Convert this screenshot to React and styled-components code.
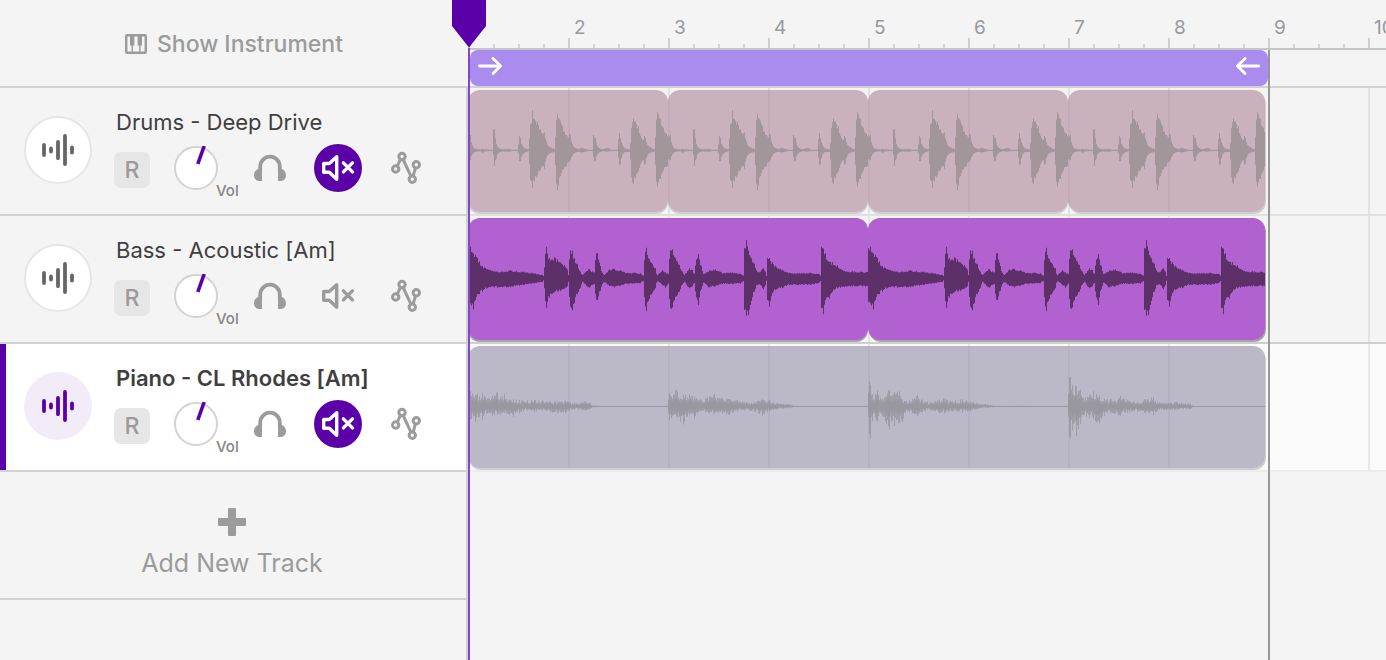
import React, { useState } from "react";
import styled, { createGlobalStyle, css } from "styled-components";

const GlobalStyle = createGlobalStyle`
  *, *::before, *::after { box-sizing: border-box; }
  body {
    margin: 0;
    background: #f4f4f4;
    font-family: Inter, "Liberation Sans", sans-serif;
    color: #3f3f3f;
  }
  button { font: inherit; color: inherit; background: none; border: 0; padding: 0; cursor: pointer; }
`;

const BAR = 100;
const LINE = "#d1d1d1";
const ACCENT = "#5b00a8";

/* ---------- layout ---------- */

const Studio = styled.div`
  display: flex;
  min-height: 100vh;
  overflow: hidden;
`;

const Sidebar = styled.aside`
  flex: 0 0 468px;
  display: flex;
  flex-direction: column;
`;

const SidebarHeader = styled.header`
  height: 88px;
  padding-top: 2px;
  display: flex;
  align-items: center;
  justify-content: center;
  border-bottom: 2px solid ${LINE};
`;

const TrackList = styled.div`
  flex: 1;
  border-right: 2px solid ${LINE};
`;

const InstrumentButton = styled.button`
  display: flex;
  align-items: center;
  gap: 10px;
  font-size: 23px;
  font-weight: 500;
  line-height: 32px;
  color: #9b9b9b;
`;

const TrackRow = styled.section`
  height: 128px;
  display: flex;
  gap: 22px;
  padding: 18px 24px 0;
  border-bottom: 2px solid ${LINE};
  ${(p) => p.$selected && css`
    background: #fff;
    box-shadow: inset 6px 0 ${ACCENT};
  `}
`;

const Avatar = styled.button`
  flex: none;
  width: 68px;
  height: 68px;
  margin-top: 10px;
  border-radius: 50%;
  display: grid;
  place-items: center;
  background: ${(p) => (p.$selected ? "#f2ecf9" : "#fff")};
  border: 2px solid ${(p) => (p.$selected ? "#f2ecf9" : "#e6e6e6")};
  color: ${(p) => (p.$selected ? ACCENT : "#666")};
`;

const TrackInfo = styled.div`
  display: flex;
  flex-direction: column;
  gap: 6px;
`;

const TrackName = styled.h2`
  margin: 0;
  padding-left: 2px;
  font-size: 22px;
  line-height: 32px;
  font-weight: ${(p) => (p.$selected ? 600 : 400)};
  white-space: nowrap;
`;

const Controls = styled.div`
  display: flex;
  align-items: center;
  gap: 20px;
  height: 48px;
`;

const RecordButton = styled.button`
  width: 36px;
  height: 36px;
  margin-top: 4px;
  border-radius: 7px;
  background: #e6e6e6;
  color: #9b9b9b;
  font-size: 23px;
  font-weight: 500;
  line-height: 36px;
`;

const IconButton = styled.button`
  width: 48px;
  height: 48px;
  border-radius: 50%;
  color: ${(p) => (p.$on ? "#fff" : "#9b9b9b")};
  background: ${(p) => (p.$on ? ACCENT : "transparent")};
  svg { display: block; }
`;

const KnobLabel = styled.label`
  position: relative;
  width: 56px;
  height: 48px;
  padding: 2px 4px;
  svg { display: block; }
  input {
    position: absolute;
    inset: 2px 8px 2px 4px;
    width: 44px;
    height: 44px;
    margin: 0;
    opacity: 0;
  }
  span {
    position: absolute;
    left: 46px;
    top: 37px;
    font-size: 15px;
    line-height: 20px;
    font-weight: 500;
    color: #858585;
  }
`;

const AddTrack = styled.button`
  width: 100%;
  height: 128px;
  padding: 18px 2px 0 0;
  display: flex;
  flex-direction: column;
  align-items: center;
  justify-content: center;
  gap: 10px;
  border-bottom: 2px solid ${LINE};
  font-size: 25px;
  line-height: 34px;
  color: #9b9b9b;
`;

/* ---------- timeline ---------- */

const Timeline = styled.main`
  position: relative;
  flex: 1;
  min-width: 0;
`;

const Scroller = styled.div`
  overflow: hidden;
`;

const Ruler = styled.div`
  display: flex;
  height: 50px;
  border-bottom: 2px solid #c6c6c6;
`;

const RulerBar = styled.div`
  flex: 0 0 ${BAR}px;
  display: flex;
  flex-direction: column;
  justify-content: flex-end;
  span {
    padding-left: 6px;
    font-size: 19px;
    line-height: 20px;
    color: #98989e;
  }
`;

const Ticks = styled.div`
  display: flex;
  align-items: flex-end;
  gap: 23px;
  height: 10px;
  i { width: 2px; height: 4px; background: #d4d4d4; }
  i:first-child { height: 10px; background: #cfcfcf; }
`;

const LoopTrack = styled.div`
  height: 38px;
  padding-left: 2px;
  border-bottom: 2px solid ${LINE};
`;

const LoopRegion = styled.div`
  width: 798px;
  height: 36px;
  padding: 0 8px;
  display: flex;
  align-items: center;
  justify-content: space-between;
  border-radius: 8px;
  background: #aa8cee;
  color: #fff;
  button { padding-bottom: 4px; }
  svg { display: block; }
`;

const Lane = styled.div`
  height: 128px;
  display: flex;
  padding-top: 2px;
  border-bottom: 2px solid ${(p) => p.$line};
  background:
    repeating-linear-gradient(90deg, #00000012 0 2px, transparent 2px ${BAR}px)
    ${(p) => (p.$selected ? "#fafafa" : "#f4f4f4")};
`;

const Clip = styled.div`
  flex: none;
  width: ${(p) => p.$bars * BAR}px;
  height: 122px;
  overflow: hidden;
  border-radius: 12px;
  background: ${(p) => p.$fill};
  color: ${(p) => p.$wave};
  box-shadow: 0 2px ${(p) => p.$shadow};
  svg { display: block; }
  &:last-child {
    width: ${(p) => p.$bars * BAR - 3}px;
    box-shadow: 1px 2px ${(p) => p.$shadow};
  }
`;

const Playhead = styled.div`
  position: absolute;
  z-index: 2;
  top: 0;
  bottom: 0;
  left: -16px;
  width: 34px;
  display: flex;
  flex-direction: column;
  align-items: center;
  svg { display: block; flex: none; }
  &::after { content: ""; flex: 1; width: 2px; background: #8048c9; }
`;

const EndLine = styled.div`
  position: absolute;
  top: 50px;
  bottom: 0;
  left: 800px;
  width: 2px;
  background: #979797;
`;

/* ---------- icons ---------- */

const PianoIcon = () => (
  <svg width="22" height="20" viewBox="0 0 22 20" aria-hidden="true">
    <rect x="1.2" y="1.2" width="19.6" height="17.6" rx="1" fill="none" stroke="currentColor" strokeWidth="2.4" />
    <path d="M5 1h4.3v10.5H5zM12.7 1H17v10.5h-4.3zM6.5 11h1.4v8H6.5zM14.2 11h1.4v8h-1.4z" fill="currentColor" />
  </svg>
);

const WaveIcon = () => (
  <svg width="36" height="36" viewBox="-18 -18 36 36" aria-hidden="true" stroke="currentColor" strokeWidth="3.8" strokeLinecap="round">
    <path d="M-14 -5V5M-7 -1.5V1.5M0 -8.2V8.2M7 -14V14M14 -2.5V2.5" />
  </svg>
);

const HeadphonesIcon = () => (
  <svg width="48" height="48" viewBox="0 0 48 48" aria-hidden="true">
    <path d="M14.2 27V22.5a9.8 9.8 0 0 1 19.6 0V27" fill="none" stroke="currentColor" strokeWidth="3.8" />
    <path d="M16 24.6V37h-2.6C10 37 8 34.3 8 31.2c0-3.2 1.7-5.4 4.4-6.2zM32 24.6V37h2.6c3.4 0 5.4-2.700 5.4-5.800 0-3.200-1.700-5.400-4.400-6.200z" fill="currentColor" />
  </svg>
);

const MuteIcon = () => (
  <svg width="48" height="48" viewBox="0 0 48 48" aria-hidden="true" fill="none" stroke="currentColor" strokeWidth="3.4" strokeLinejoin="round" strokeLinecap="round">
    <path d="M9.7 19.5h5.6L22.7 12.7V35.3L15.3 28.2H9.7z" />
    <path d="M29.4 18.9l9 9M38.4 18.9l-9 9" />
  </svg>
);

const AutomationIcon = () => (
  <svg width="48" height="48" viewBox="0 0 48 48" aria-hidden="true" fill="none" stroke="currentColor" strokeWidth="3">
    <circle cx="13.7" cy="25" r="3.2" />
    <circle cx="20" cy="12.5" r="3.2" />
    <circle cx="34.3" cy="20.7" r="3.2" />
    <circle cx="30.3" cy="35.3" r="3.2" />
    <path d="M15.2 22.1L18.5 15.4M21.2 15.5L29 32.3M31.2 32.2L33.4 23.8" />
  </svg>
);

const ArrowIcon = ({ left }) => (
  <svg width="24" height="18" viewBox="0 0 24 18" aria-hidden="true" fill="none" stroke="currentColor" strokeWidth="2.8" strokeLinecap="round" strokeLinejoin="round">
    <path d={left ? "M22.6 9H1.6M9 1.4L1.4 9L9 16.6" : "M1.4 9H22.4M15 1.4L22.6 9L15 16.6"} />
  </svg>
);

const PlusIcon = () => (
  <svg width="28" height="28" viewBox="0 0 28 28" aria-hidden="true" fill="currentColor">
    <rect x="10" y="0" width="8" height="28" rx="1" />
    <rect x="0" y="10" width="28" height="8" rx="1" />
  </svg>
);

const KnobDial = () => (
  <svg width="44" height="44" viewBox="0 0 44 44" aria-hidden="true">
    <circle cx="22" cy="22" r="21" fill="#fff" stroke="#d2d2d2" strokeWidth="2" />
    <path d="M23.8 18L30.2 0" stroke={ACCENT} strokeWidth="3.6" />
  </svg>
);

/* ---------- wave forms ----------
   Envelope points are [x, above, below], at three units to a pixel. */

const DRUMS = [
  [0, 45, 27], [6, 46, 29], [10, 20, 15], [15, 9, 9], [23, 4, 4], [38, 3, 3], [41, 5, 9], [50, 3, 3], [73, 2, 2],
  [75, 62, 15], [78, 64, 46], [83, 22, 28], [88, 10, 9], [100, 3, 3], [121, 5, 5], [132, 2, 2], [149, 2, 2],
  [151, 34, 16], [154, 47, 40], [159, 20, 20], [166, 8, 9], [180, 3, 3],
  [186, 78, 90], [189, 82, 92], [192, 120, 112], [197, 95, 95], [206, 88, 76], [216, 64, 60], [222, 50, 46], [227, 58, 62], [232, 34, 28], [238, 14, 14], [250, 7, 7], [260, 4, 4],
  [262, 78, 84], [267, 110, 120], [274, 95, 84], [282, 74, 60], [292, 48, 52], [300, 38, 34], [304, 58, 36], [309, 26, 20], [318, 9, 8], [332, 4, 4], [340, 8, 7], [350, 4, 4], [362, 2, 2], [373, 2, 2],
  [375, 46, 20], [379, 46, 40], [385, 18, 14], [390, 8, 8], [402, 3, 3], [416, 8, 4], [430, 2, 2], [449, 2, 2],
  [451, 64, 44], [455, 40, 46], [461, 18, 14], [468, 7, 6], [485, 2, 5],
  [488, 60, 72], [493, 100, 108], [500, 88, 86], [510, 72, 62], [519, 36, 36], [526, 32, 30], [529, 48, 50], [534, 24, 24], [541, 12, 10], [552, 5, 5], [560, 3, 3],
  [562, 78, 84], [567, 114, 108], [574, 100, 92], [584, 70, 62], [594, 50, 50], [600, 46, 46],
];

const BASS = [
  [0, 90, 70], [6, 95, 75], [14, 75, 98], [21, 70, 65], [31, 55, 50], [41, 38, 40], [56, 28, 30], [66, 25, 27], [86, 20, 28], [126, 24, 27], [166, 20, 20], [196, 16, 16], [222, 11, 11], [227, 5, 5],
  [229, 60, 55], [234, 95, 88], [241, 60, 60], [256, 65, 42], [266, 58, 40], [276, 48, 37], [286, 42, 32], [296, 32, 27], [300, 10, 10],
  [304, 80, 75], [310, 90, 103], [318, 60, 75], [326, 45, 50], [336, 20, 28], [342, 10, 10], [361, 30, 30], [371, 20, 20], [379, 22, 18],
  [382, 70, 60], [386, 80, 68], [394, 45, 45], [401, 18, 18], [408, 10, 12], [421, 26, 22], [436, 29, 28], [456, 24, 22], [476, 17, 17], [496, 18, 16], [516, 15, 15], [525, 8, 8],
  [529, 70, 75], [534, 92, 98], [541, 60, 65], [551, 45, 45], [561, 30, 30], [566, 8, 8], [581, 25, 20], [591, 18, 28], [601, 15, 15],
  [604, 80, 85], [610, 95, 95], [618, 65, 65], [631, 45, 45], [641, 22, 20], [648, 10, 10], [661, 30, 30], [673, 25, 28], [677, 5, 5],
  [682, 50, 50], [690, 73, 80], [698, 40, 35], [706, 12, 12], [721, 23, 28], [741, 27, 24], [766, 16, 16], [791, 18, 18], [816, 14, 16], [825, 8, 8],
  [828, 90, 95], [834, 115, 112], [838, 90, 120], [846, 65, 80], [856, 50, 45], [866, 20, 20], [873, 18, 18], [884, 32, 35], [891, 20, 20], [895, 5, 5],
  [897, 60, 65], [902, 62, 90], [911, 50, 45], [921, 38, 35], [941, 26, 30], [961, 17, 20], [986, 15, 20], [1026, 17, 20], [1051, 14, 15], [1056, 8, 8],
  [1059, 95, 90], [1064, 92, 115], [1071, 75, 65], [1081, 50, 65], [1091, 50, 42], [1106, 40, 30], [1126, 22, 27], [1156, 21, 24], [1198, 20, 26], [1200, 6, 6],
];

const PIANO = [
  [0, 45, 40], [6, 45, 40], [21, 35, 48], [41, 42, 42], [56, 22, 20], [71, 30, 30], [86, 45, 25], [96, 28, 25], [108, 38, 20], [121, 20, 25], [134, 22, 32], [151, 20, 22], [176, 18, 12], [196, 20, 18], [221, 20, 12], [246, 15, 18], [266, 15, 20], [291, 17, 20], [316, 12, 10], [351, 16, 12], [366, 10, 8], [373, 3, 3], [406, 1, 2], [599, 1, 2],
  [601, 38, 42], [624, 50, 30], [643, 35, 58], [661, 38, 25], [676, 30, 38], [696, 22, 15], [721, 28, 20], [738, 38, 25], [761, 25, 22], [781, 22, 28], [806, 20, 15], [826, 12, 12], [856, 12, 15], [882, 22, 28], [902, 20, 14], [926, 10, 10], [961, 8, 6], [976, 2, 2], [1006, 1, 2], [1199, 1, 2],
  [1201, 80, 60], [1205, 70, 108], [1211, 35, 45], [1226, 50, 45], [1241, 20, 25], [1261, 55, 75], [1271, 30, 40], [1276, 42, 60], [1292, 48, 50], [1301, 20, 50], [1311, 15, 20], [1331, 22, 20], [1346, 35, 30], [1361, 22, 18], [1386, 12, 12], [1411, 20, 20], [1426, 24, 22], [1451, 15, 15], [1481, 22, 20], [1506, 15, 15], [1536, 7, 6], [1556, 7, 6], [1576, 2, 2], [1799, 1, 2],
  [1801, 75, 60], [1804, 95, 106], [1811, 65, 70], [1824, 60, 90], [1834, 58, 60], [1844, 26, 26], [1861, 30, 35], [1874, 47, 38], [1891, 35, 55], [1906, 22, 30], [1926, 22, 22], [1956, 32, 30], [1976, 20, 20], [2006, 14, 15], [2031, 22, 20], [2054, 28, 28], [2071, 12, 12], [2116, 14, 12], [2166, 8, 8], [2176, 1, 2], [2400, 1, 2],
];

const noise = (n) => {
  const s = Math.sin(n * 12.9898) * 43758.5453;
  return s - Math.floor(s);
};

function wavePath(points, rough, scale = 1) {
  const top = [];
  const bottom = [];
  const end = points[points.length - 1][0];
  let k = 0;
  for (let x = 0; x < end; x += 3) {
    while (k < points.length - 2 && points[k + 1][0] <= x) k += 1;
    const [x0, u0, d0] = points[k];
    const [x1, u1, d1] = points[k + 1];
    const t = (x - x0) / (x1 - x0);
    const peak = x - x0 < 3;
    const up = (u0 + (u1 - u0) * t) * (peak ? 1 : 1 - rough * noise(x)) * scale;
    const down = (d0 + (d1 - d0) * t) * (peak ? 1 : 1 - rough * noise(x + 7777)) * scale;
    const a = (181 - Math.max(up, 1)).toFixed(1);
    const b = (181 + Math.max(down, 2)).toFixed(1);
    top.push(`${x} ${a}L${x + 3} ${a}`);
    bottom.unshift(`${x + 3} ${b}L${x} ${b}`);
  }
  return `M${top.join("L")}L${bottom.join("L")}Z`;
}

function Waveform({ points, rough, soft }) {
  const end = points[points.length - 1][0];
  return (
    <svg width={end / 3} height="122" viewBox={`0 0 ${end} 366`} fill="currentColor" aria-hidden="true">
      <path d={wavePath(points, rough)} opacity={soft ? 0.75 : 1} />
      {soft && <path d={wavePath(points, rough, 0.5)} opacity="0.6" />}
    </svg>
  );
}

/* ---------- content ---------- */

const TRACKS = [
  {
    name: "Drums - Deep Drive", muted: true, line: "#e1e1e1", clips: [2, 2, 2, 2],
    fill: "rgba(172, 134, 152, 0.6)", wave: "#a2969b", shadow: "#cecece", points: DRUMS, rough: 0.15,
  },
  {
    name: "Bass - Acoustic [Am]", muted: false, line: "#cfcfcf", clips: [4, 4],
    fill: "#b162d0", wave: "#5d3069", shadow: "#a6a6a6", points: BASS, rough: 0.18,
  },
  {
    name: "Piano - CL Rhodes [Am]", muted: true, selected: true, line: "#ececec", clips: [8],
    fill: "rgba(145, 140, 167, 0.6)", wave: "#96949d", shadow: "#cecece", points: PIANO, rough: 0.55, soft: true,
  },
];

function Track({ track }) {
  const [muted, setMuted] = useState(track.muted);
  return (
    <TrackRow $selected={track.selected}>
      <Avatar $selected={track.selected} aria-label={`Select ${track.name}`}><WaveIcon /></Avatar>
      <TrackInfo>
        <TrackName $selected={track.selected}>{track.name}</TrackName>
        <Controls>
          <RecordButton>R</RecordButton>
          <KnobLabel>
            <KnobDial />
            <input type="range" min="0" max="100" defaultValue="60" />
            <span>Vol</span>
          </KnobLabel>
          <IconButton aria-label="Solo"><HeadphonesIcon /></IconButton>
          <IconButton aria-label="Mute" aria-pressed={muted} $on={muted} onClick={() => setMuted(!muted)}><MuteIcon /></IconButton>
          <IconButton aria-label="Automation"><AutomationIcon /></IconButton>
        </Controls>
      </TrackInfo>
    </TrackRow>
  );
}

export default function App() {
  return (
    <Studio>
      <GlobalStyle />
      <Sidebar>
        <SidebarHeader>
          <InstrumentButton><PianoIcon />Show Instrument</InstrumentButton>
        </SidebarHeader>
        <TrackList>
          {TRACKS.map((t) => <Track key={t.name} track={t} />)}
          <AddTrack><PlusIcon />Add New Track</AddTrack>
        </TrackList>
      </Sidebar>
      <Timeline>
        <Scroller>
          <Ruler>
            {Array.from({ length: 10 }, (_, i) => (
              <RulerBar key={i}>
                {i > 0 && <span>{i + 1}</span>}
                <Ticks><i /><i /><i /><i /></Ticks>
              </RulerBar>
            ))}
          </Ruler>
          <LoopTrack>
            <LoopRegion>
              <button aria-label="Loop start"><ArrowIcon /></button>
              <button aria-label="Loop end"><ArrowIcon left /></button>
            </LoopRegion>
          </LoopTrack>
          {TRACKS.map((t) => (
            <Lane key={t.name} $line={t.line} $selected={t.selected}>
              {t.clips.map((bars, i) => (
                <Clip key={i} $bars={bars} $fill={t.fill} $wave={t.wave} $shadow={t.shadow}>
                  <Waveform points={t.points} rough={t.rough} soft={t.soft} />
                </Clip>
              ))}
            </Lane>
          ))}
        </Scroller>
        <EndLine />
        <Playhead>
          <svg width="34" height="48" viewBox="0 0 34 48" aria-hidden="true">
            <path d="M0 0H34V26L17 47.5L0 26Z" fill={ACCENT} />
          </svg>
        </Playhead>
      </Timeline>
    </Studio>
  );
}
